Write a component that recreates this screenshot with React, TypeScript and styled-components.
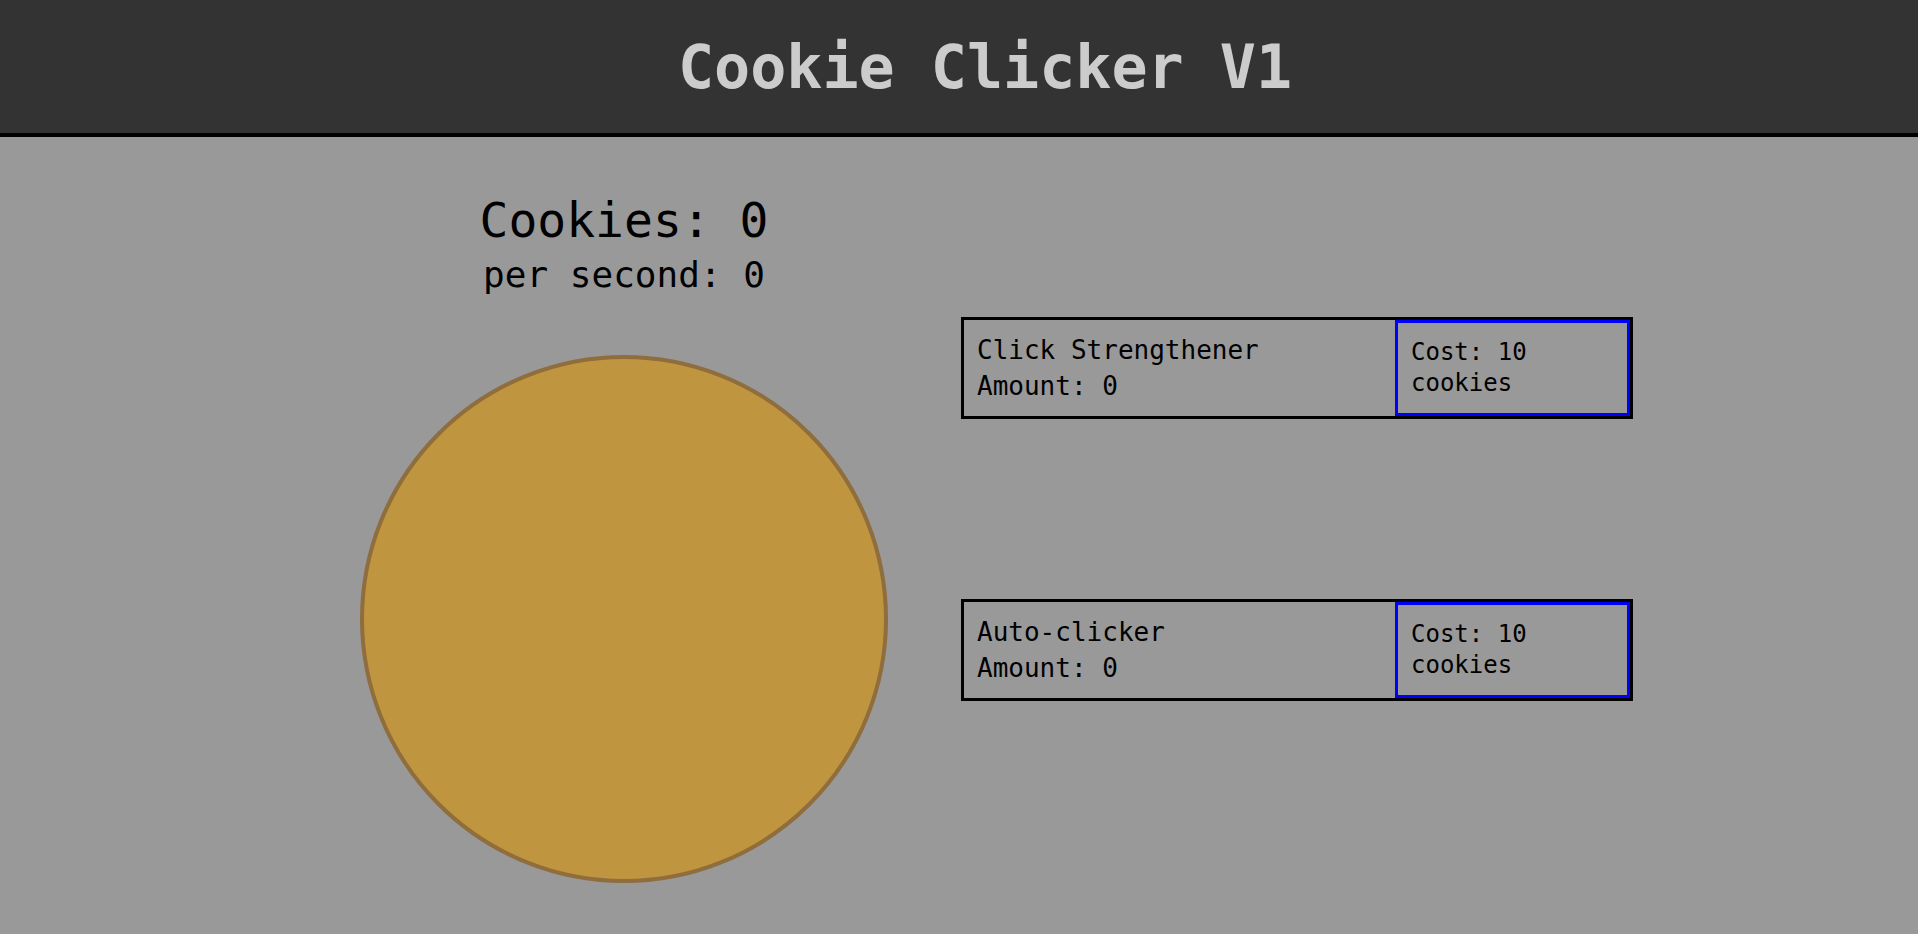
import React from "react";
import styled, { createGlobalStyle } from "styled-components";

const GlobalStyle = createGlobalStyle`
  html, body {
    margin: 0;
    padding: 0;
    background: #999999;
    min-height: 100%;
  }
  body {
    font-family: "DejaVu Sans Mono", "Liberation Mono", monospace;
    color: #000;
  }
`;

const Header = styled.header`
  height: 133px;
  background: #333333;
  border-bottom: 4px solid #000;
  display: flex;
  align-items: center;
  justify-content: center;
  padding-left: 52px;
`;

const Title = styled.h1`
  margin: 0;
  font-family: "DejaVu Sans Mono", "Liberation Mono", monospace;
  font-weight: bold;
  font-size: 60px;
  line-height: 70px;
  color: #cccccc;
`;

const Main = styled.main`
  display: flex;
  align-items: flex-start;
  gap: 73px;
  padding: 55px 0 0 360px;
`;

const LeftColumn = styled.section`
  width: 528px;
  display: flex;
  flex-direction: column;
  align-items: center;
`;

const CookieCount = styled.div`
  font-size: 48px;
  line-height: 56px;
`;

const PerSecond = styled.div`
  margin-top: 6px;
  font-size: 36px;
  line-height: 42px;
`;

const Cookie = styled.div`
  margin-top: 59px;
  width: 520px;
  height: 520px;
  border-radius: 50%;
  background: #bf9540;
  border: 4px solid #8f6d3c;
  cursor: pointer;
`;

const RightColumn = styled.section`
  margin-top: 125px;
  display: flex;
  flex-direction: column;
  gap: 180px;
`;

const Upgrade = styled.div`
  width: 666px;
  height: 96px;
  border: 3px solid #000;
  display: flex;
`;

const UpgradeInfo = styled.div`
  flex: 1;
  display: flex;
  flex-direction: column;
  justify-content: center;
  padding-left: 13px;
  font-size: 26px;
  line-height: 36px;
`;

const BuyButton = styled.div`
  width: 216px;
  border: 3px solid #0000ff;
  display: flex;
  flex-direction: column;
  justify-content: center;
  padding-left: 13px;
  font-size: 24px;
  line-height: 31px;
  cursor: pointer;
`;

const upgrades = [
  { name: "Click Strengthener", amount: 0, cost: 10 },
  { name: "Auto-clicker", amount: 0, cost: 10 },
];

export default function App() {
  return (
    <>
      <GlobalStyle />
      <Header>
        <Title>Cookie Clicker V1</Title>
      </Header>
      <Main>
        <LeftColumn>
          <CookieCount>Cookies: 0</CookieCount>
          <PerSecond>per second: 0</PerSecond>
          <Cookie />
        </LeftColumn>
        <RightColumn>
          {upgrades.map((u) => (
            <Upgrade key={u.name}>
              <UpgradeInfo>
                <div>{u.name}</div>
                <div>Amount: {u.amount}</div>
              </UpgradeInfo>
              <BuyButton>
                <div>Cost: {u.cost}</div>
                <div>cookies</div>
              </BuyButton>
            </Upgrade>
          ))}
        </RightColumn>
      </Main>
    </>
  );
}
